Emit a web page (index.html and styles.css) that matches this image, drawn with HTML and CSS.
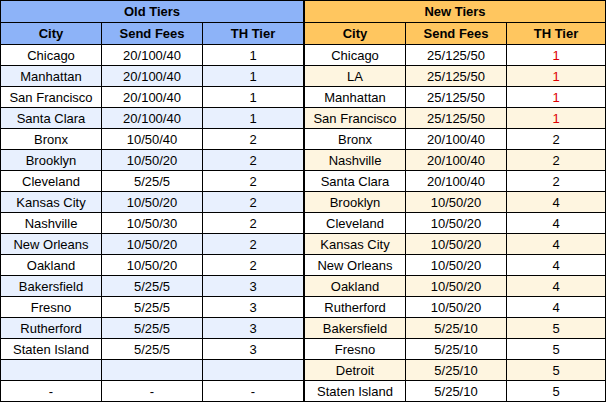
FILE: index.html
```html
<!DOCTYPE html>
<html>
<head>
<meta charset="utf-8">
<link rel="stylesheet" href="styles.css">
</head>
<body>
<div class="sheet">
  <div class="grid old">
    <div class="cell title span3">Old Tiers</div>
    <div class="cell head">City</div><div class="cell head">Send Fees</div><div class="cell head">TH Tier</div>
    <div class="cell">Chicago</div><div class="cell">20/100/40</div><div class="cell">1</div>
    <div class="cell alt">Manhattan</div><div class="cell alt">20/100/40</div><div class="cell alt">1</div>
    <div class="cell">San Francisco</div><div class="cell">20/100/40</div><div class="cell">1</div>
    <div class="cell alt">Santa Clara</div><div class="cell alt">20/100/40</div><div class="cell alt">1</div>
    <div class="cell">Bronx</div><div class="cell">10/50/40</div><div class="cell">2</div>
    <div class="cell alt">Brooklyn</div><div class="cell alt">10/50/20</div><div class="cell alt">2</div>
    <div class="cell">Cleveland</div><div class="cell">5/25/5</div><div class="cell">2</div>
    <div class="cell alt">Kansas City</div><div class="cell alt">10/50/20</div><div class="cell alt">2</div>
    <div class="cell">Nashville</div><div class="cell">10/50/30</div><div class="cell">2</div>
    <div class="cell alt">New Orleans</div><div class="cell alt">10/50/20</div><div class="cell alt">2</div>
    <div class="cell">Oakland</div><div class="cell">10/50/20</div><div class="cell">2</div>
    <div class="cell alt">Bakersfield</div><div class="cell alt">5/25/5</div><div class="cell alt">3</div>
    <div class="cell">Fresno</div><div class="cell">5/25/5</div><div class="cell">3</div>
    <div class="cell alt">Rutherford</div><div class="cell alt">5/25/5</div><div class="cell alt">3</div>
    <div class="cell">Staten Island</div><div class="cell">5/25/5</div><div class="cell">3</div>
    <div class="cell alt"></div><div class="cell alt"></div><div class="cell alt"></div>
    <div class="cell">-</div><div class="cell">-</div><div class="cell">-</div>
  </div>
  <div class="grid new">
    <div class="cell title span3">New Tiers</div>
    <div class="cell head">City</div><div class="cell head">Send Fees</div><div class="cell head">TH Tier</div>
    <div class="cell">Chicago</div><div class="cell">25/125/50</div><div class="cell red">1</div>
    <div class="cell alt">LA</div><div class="cell alt">25/125/50</div><div class="cell alt red">1</div>
    <div class="cell">Manhattan</div><div class="cell">25/125/50</div><div class="cell red">1</div>
    <div class="cell alt">San Francisco</div><div class="cell alt">25/125/50</div><div class="cell alt red">1</div>
    <div class="cell">Bronx</div><div class="cell">20/100/40</div><div class="cell">2</div>
    <div class="cell alt">Nashville</div><div class="cell alt">20/100/40</div><div class="cell alt">2</div>
    <div class="cell">Santa Clara</div><div class="cell">20/100/40</div><div class="cell">2</div>
    <div class="cell alt">Brooklyn</div><div class="cell alt">10/50/20</div><div class="cell alt">4</div>
    <div class="cell">Cleveland</div><div class="cell">10/50/20</div><div class="cell">4</div>
    <div class="cell alt">Kansas City</div><div class="cell alt">10/50/20</div><div class="cell alt">4</div>
    <div class="cell">New Orleans</div><div class="cell">10/50/20</div><div class="cell">4</div>
    <div class="cell alt">Oakland</div><div class="cell alt">10/50/20</div><div class="cell alt">4</div>
    <div class="cell">Rutherford</div><div class="cell">10/50/20</div><div class="cell">4</div>
    <div class="cell alt">Bakersfield</div><div class="cell alt">5/25/10</div><div class="cell alt">5</div>
    <div class="cell">Fresno</div><div class="cell">5/25/10</div><div class="cell">5</div>
    <div class="cell alt">Detroit</div><div class="cell alt">5/25/10</div><div class="cell alt">5</div>
    <div class="cell">Staten Island</div><div class="cell">5/25/10</div><div class="cell">5</div>
  </div>
</div>
</body>
</html>
```
FILE: styles.css
```css
html, body {
  margin: 0;
  padding: 0;
  background: #ffffff;
}
body {
  font-family: "Liberation Sans", Arial, sans-serif;
  font-size: 13px;
  color: #000000;
}
.sheet {
  display: flex;
  align-items: flex-start;
}
.grid {
  display: grid;
  background: #000000;
  padding: 1px;
  gap: 1px;
  grid-template-rows: 21px 21px;
  grid-auto-rows: 20px;
}
.old {
  grid-template-columns: 100px 100px 100px;
}
.new {
  grid-template-columns: 100px 100px 98px;
}
.cell {
  background: #ffffff;
  text-align: center;
  line-height: 20px;
  padding-top: 1px;
  box-sizing: border-box;
  white-space: nowrap;
  overflow: hidden;
}
.title, .head {
  font-weight: bold;
  line-height: 20px;
}
.span3 {
  grid-column: span 3;
}
.old .title, .old .head {
  background: #8db3f8;
}
.new .title, .new .head {
  background: #ffc65f;
}
.old .alt {
  background: #e8f0fe;
}
.new .alt {
  background: #fef5e0;
}
.red {
  color: #dd0000;
}
```
